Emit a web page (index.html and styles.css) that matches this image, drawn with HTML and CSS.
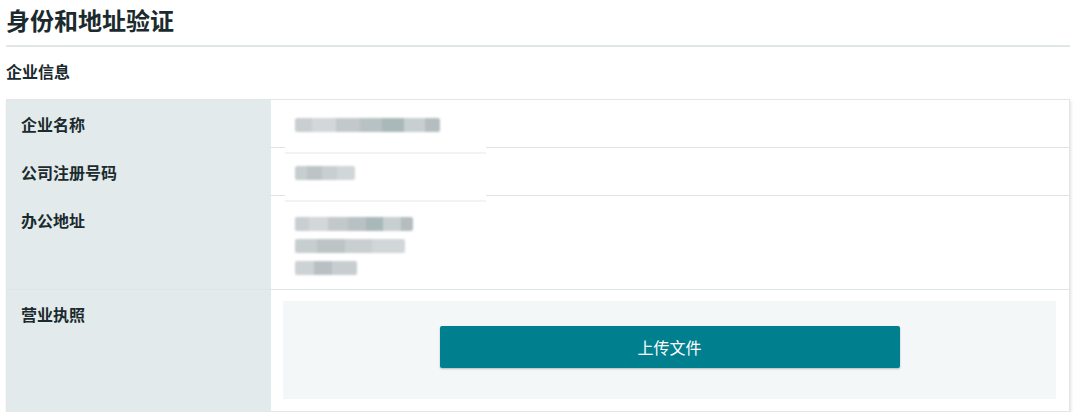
FILE: index.html
```html
<!DOCTYPE html>
<html lang="zh-CN">
<head>
<meta charset="utf-8">
<title>身份和地址验证</title>
<link rel="stylesheet" href="styles.css">
</head>
<body>
<div class="page">
  <h1 class="title">身份和地址验证</h1>
  <h2 class="section">企业信息</h2>
  <div class="table">
    <div class="row row-short">
      <div class="label">企业名称</div>
      <div class="value">
        <div class="mask mask-line">
          <span class="blur b1" style="width:145px"></span>
        </div>
      </div>
    </div>
    <div class="row row-short">
      <div class="label">公司注册号码</div>
      <div class="value">
        <div class="mask mask-line">
          <span class="blur b2" style="width:60px"></span>
        </div>
      </div>
    </div>
    <div class="row row-addr">
      <div class="label">办公地址</div>
      <div class="value">
        <div class="mask addr">
          <span class="blur b1" style="width:118px"></span>
          <span class="blur b2" style="width:110px"></span>
          <span class="blur b3" style="width:62px"></span>
        </div>
      </div>
    </div>
    <div class="row row-upload">
      <div class="label">营业执照</div>
      <div class="value value-upload">
        <div class="upload">
          <button class="btn" type="button">上传文件</button>
        </div>
      </div>
    </div>
  </div>
</div>
</body>
</html>
```
FILE: styles.css
```css
* { box-sizing: border-box; }
html, body {
  margin: 0;
  padding: 0;
  background: #ffffff;
}
body {
  font-family: "Noto Sans CJK SC", "Noto Sans", sans-serif;
  color: #1b2a2e;
}
.page {
  padding: 0 10px 0 6px;
}
.title {
  margin: 0;
  padding: 6px 0 11px;
  font-size: 24px;
  line-height: 28px;
  font-weight: 700;
  color: #1b2a2e;
  border-bottom: 2px solid #e1e6e6;
}
.section {
  margin: 14px 0 0;
  font-size: 16px;
  line-height: 20px;
  font-weight: 700;
  color: #1b2a2e;
}
.table {
  margin-top: 18px;
  border: 1px solid #e3e6e6;
  box-shadow: 1px 2px 3px rgba(0,0,0,0.12);
  background: #ffffff;
}
.row {
  display: grid;
  grid-template-columns: 264px 1fr;
  border-top: 1px solid #dfe5e6;
}
.row:first-child { border-top: none; }
.row-short { height: 48px; }
.row:first-child.row-short { height: 47px; }
.row-addr { height: 94px; }
.row-upload { height: 122px; }
.label {
  background: #e2eaeb;
  padding: 13px 14px;
  font-size: 16px;
  line-height: 22px;
  font-weight: 700;
  color: #1b2a2e;
}
.value {
  padding: 17px 14px 0 14px;
  position: relative;
}
.mask {
  width: 201px;
  padding-left: 10px;
  background: #ffffff;
}
.mask-line {
  height: 36px;
  border-bottom: 2px solid #f2f3f3;
}
.addr {
  display: flex;
  flex-direction: column;
  gap: 8px;
  padding-top: 4px;
}
.blur {
  display: block;
  height: 14px;
  filter: blur(1.2px);
  border-radius: 2px;
}
.b1 {
  background: linear-gradient(90deg, #c9ced0 0 12%, #d3d7d9 12% 28%, #c3c9cb 28% 45%, #b8c1c3 45% 60%, #a9b8b8 60% 75%, #c8cfd1 75% 90%, #b5bdc0 90% 100%);
}
.b2 {
  background: linear-gradient(90deg, #c7cecf 0 20%, #bcc4c5 20% 45%, #c9cfd1 45% 70%, #d1d6d8 70% 100%);
}
.b3 {
  background: linear-gradient(90deg, #cdd2d4 0 30%, #b9c0c3 30% 60%, #c8cdd0 60% 100%);
}
.row-short .value .blur { margin-top: 1px; }
.value-upload {
  padding: 11px 13px 13px 12px;
}
.upload {
  height: 98px;
  background: #f4f7f8;
  display: flex;
  justify-content: center;
  align-items: flex-start;
  padding-top: 25px;
}
.btn {
  width: 460px;
  height: 42px;
  border: none;
  border-radius: 2px;
  background: #00808f;
  box-shadow: 0 1px 2px rgba(0,0,0,0.25);
  color: #ffffff;
  font-family: "Noto Sans CJK SC", "Noto Sans", sans-serif;
  font-size: 16px;
  line-height: 42px;
  padding: 0;
  cursor: pointer;
}
```
